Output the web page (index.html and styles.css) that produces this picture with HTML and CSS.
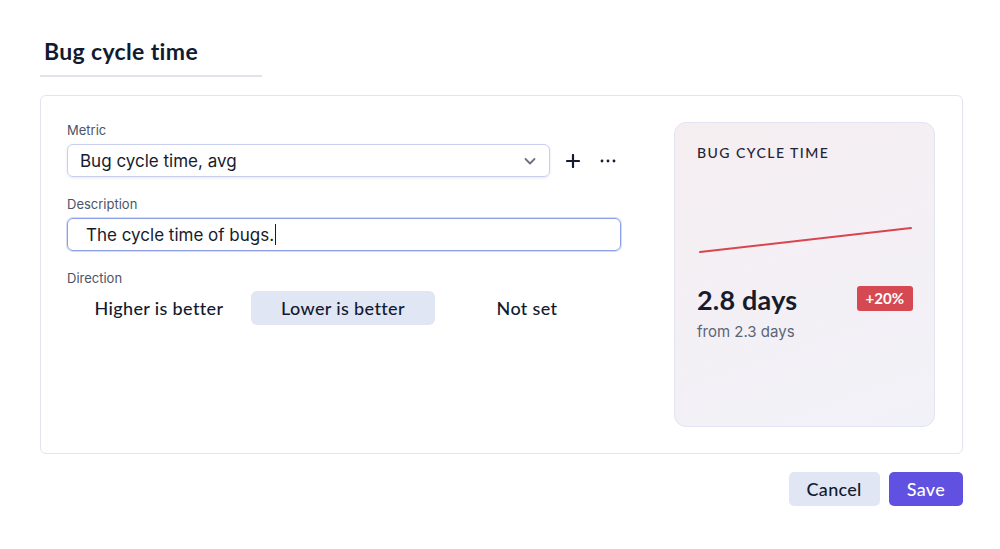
FILE: index.html
```html
<!DOCTYPE html>
<html lang="en">
<head>
<meta charset="utf-8">
<title>Bug cycle time</title>
<link rel="stylesheet" href="styles.css">
</head>
<body>
<div class="page">
  <header class="header">
    <h1 class="title">Bug cycle time</h1>
  </header>

  <section class="card">
    <div class="form">
      <label class="label">Metric</label>
      <div class="metric-row">
        <div class="select">
          <span>Bug cycle time, avg</span>
          <svg class="chevron" width="14" height="14" viewBox="0 0 14 14"><path d="M2.5 5 L7 9.5 L11.5 5" fill="none" stroke="#6b7180" stroke-width="1.8" stroke-linecap="round" stroke-linejoin="round"/></svg>
        </div>
        <button class="icon-btn" aria-label="Add">
          <svg width="14" height="14" viewBox="0 0 14 14"><path d="M7 1 V13 M1 7 H13" stroke="#161c2d" stroke-width="2.2" stroke-linecap="round"/></svg>
        </button>
        <button class="icon-btn" aria-label="More">
          <svg width="16" height="4" viewBox="0 0 16 4"><circle cx="2" cy="2" r="1.4" fill="#161c2d"/><circle cx="8" cy="2" r="1.4" fill="#161c2d"/><circle cx="14" cy="2" r="1.4" fill="#161c2d"/></svg>
        </button>
      </div>

      <label class="label gap">Description</label>
      <div class="input">The cycle time of bugs.<span class="caret"></span></div>

      <label class="label gap">Direction</label>
      <div class="segments">
        <div class="seg">Higher is better</div>
        <div class="seg active">Lower is better</div>
        <div class="seg">Not set</div>
      </div>
    </div>

    <aside class="preview">
      <div class="preview-title">BUG CYCLE TIME</div>
      <svg class="chart" width="215" height="80" viewBox="0 0 215 80"><line x1="3" y1="68" x2="214" y2="44" stroke="#d9454e" stroke-width="2" stroke-linecap="round"/></svg>
      <div class="value-row">
        <div class="value">2.8 days</div>
        <div class="badge">+20%</div>
      </div>
      <div class="from">from 2.3 days</div>
    </aside>
  </section>

  <footer class="actions">
    <button class="btn cancel">Cancel</button>
    <button class="btn save">Save</button>
  </footer>
</div>
</body>
</html>
```

FILE: styles.css
```css
* { box-sizing: border-box; }

html, body {
  margin: 0;
  padding: 0;
  background: #ffffff;
}

body {
  font-family: "Inter", "Liberation Sans", sans-serif;
  color: #161c2d;
}

.page {
  padding: 36px 37px 0 40px;
}

.header {
  width: 222px;
  border-bottom: 2px solid #e2e3e8;
  padding: 0 0 9px 4px;
}

.title {
  margin: 0;
  font-family: "Lato", "Liberation Sans", sans-serif;
  font-weight: 700;
  font-size: 23px;
  letter-spacing: 0.35px;
  line-height: 30px;
  color: #121a30;
}

.card {
  margin-top: 18px;
  border: 1px solid #e2e4f4;
  border-radius: 6px;
  padding: 26px 27px 26px 26px;
  display: grid;
  grid-template-columns: 556px 261px;
  justify-content: space-between;
  align-items: start;
}

.form {
  display: flex;
  flex-direction: column;
}

.label {
  font-size: 13px;
  line-height: 16px;
  color: #4b5468;
  margin-bottom: 6px;
}

.label.gap {
  margin-top: 19px;
  margin-bottom: 6px;
}

.metric-row {
  display: flex;
  align-items: center;
}

.select {
  width: 483px;
  height: 33px;
  border: 1px solid #c7cef0;
  border-radius: 6px;
  box-shadow: 0 1px 3px rgba(90, 100, 160, 0.15);
  display: flex;
  align-items: center;
  justify-content: space-between;
  padding: 0 12px;
  font-size: 17px;
  color: #161c2d;
}

.chevron {
  display: block;
}

.icon-btn {
  border: none;
  background: transparent;
  padding: 0;
  display: flex;
  align-items: center;
  justify-content: center;
  height: 33px;
  cursor: pointer;
}

.icon-btn:first-of-type {
  margin-left: 16px;
}

.icon-btn + .icon-btn {
  margin-left: 20px;
}

.input {
  width: 554px;
  height: 33px;
  border: 1px solid #8d9fe6;
  border-radius: 6px;
  box-shadow: 0 0 0 1px rgba(141, 159, 230, 0.35);
  display: flex;
  align-items: center;
  padding-left: 18px;
  font-size: 17px;
  color: #161c2d;
}

.caret {
  display: inline-block;
  width: 1px;
  height: 21px;
  background: #161c2d;
  margin-left: 1px;
}

.segments {
  display: grid;
  grid-template-columns: repeat(3, 184px);
  margin-top: -1px;
}

.seg {
  height: 34px;
  display: flex;
  align-items: center;
  justify-content: center;
  border-radius: 6px;
  font-family: "Lato", "Liberation Sans", sans-serif;
  font-weight: 500;
  font-size: 18px;
  letter-spacing: 0.35px;
  color: #121a30;
}

.seg.active {
  background: #e1e6f4;
}

.preview {
  height: 305px;
  border: 1px solid #e2e4f4;
  border-radius: 12px;
  background: linear-gradient(160deg, #f6eef1 0%, #f3f0f5 55%, #f1f2f8 100%);
  padding: 21px 21px 0 22px;
  display: flex;
  flex-direction: column;
}

.preview-title {
  font-family: "Lato", "Liberation Sans", sans-serif;
  font-size: 14px;
  font-weight: 500;
  letter-spacing: 1.45px;
  line-height: 18px;
  color: #1f2535;
}

.chart {
  display: block;
  margin-top: 22px;
}

.value-row {
  display: flex;
  align-items: center;
  justify-content: space-between;
  margin-top: 19px;
}

.value {
  font-family: "Lato", "Liberation Sans", sans-serif;
  font-weight: 700;
  font-size: 27px;
  letter-spacing: 0.2px;
  line-height: 34px;
  color: #161c2d;
}

.badge {
  background: #d54a52;
  color: #ffffff;
  font-family: "Lato", "Liberation Sans", sans-serif;
  font-weight: 700;
  font-size: 15px;
  line-height: 25px;
  height: 25px;
  padding: 0 9px;
  border-radius: 3px;
  margin-top: -3px;
}

.from {
  margin-top: 5px;
  font-size: 15px;
  color: #5b6478;
}

.actions {
  margin-top: 18px;
  display: flex;
  justify-content: flex-end;
  gap: 9px;
}

.btn {
  height: 34px;
  border: none;
  border-radius: 5px;
  font-family: "Lato", "Liberation Sans", sans-serif;
  font-weight: 500;
  font-size: 18px;
  letter-spacing: 0.3px;
  padding: 0 18px;
  cursor: pointer;
}

.btn.cancel {
  background: #e1e6f4;
  color: #121a30;
}

.btn.save {
  background: #6151e0;
  color: #ffffff;
}
```
